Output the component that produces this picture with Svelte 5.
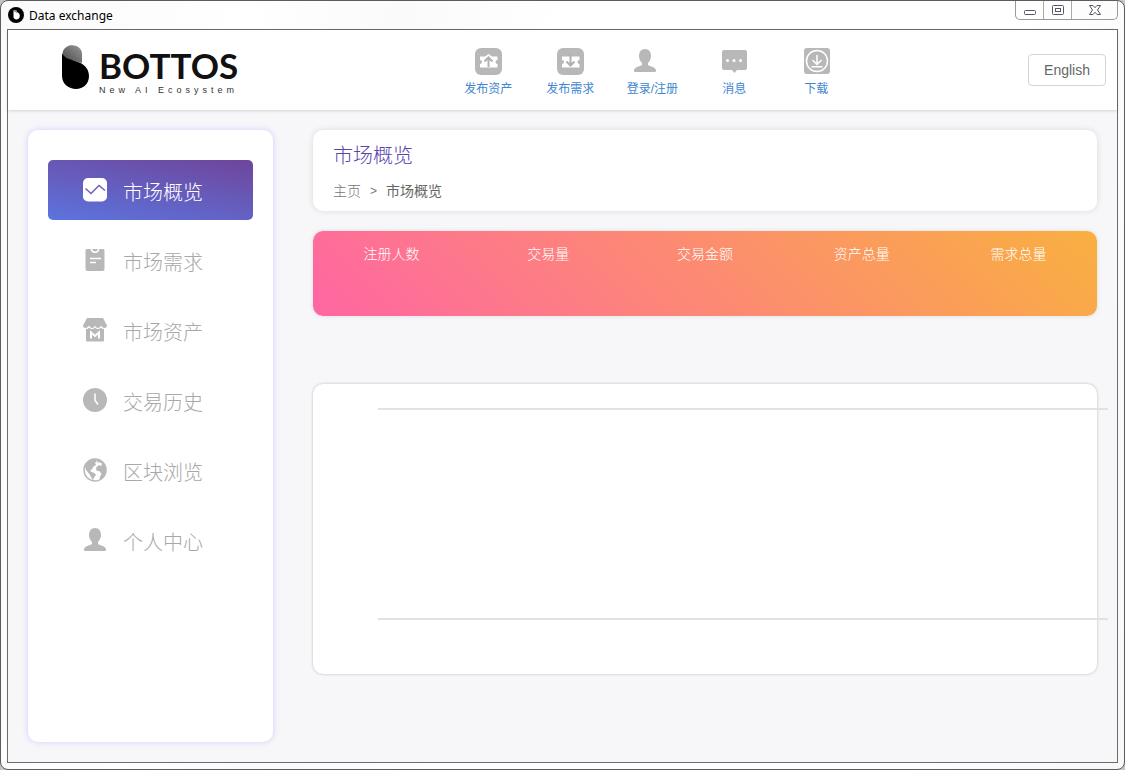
<script lang="ts">
  type Icon = 'upload' | 'request' | 'user' | 'message' | 'download' | 'chart' | 'clipboard' | 'shop' | 'clock' | 'globe';

  interface NavItem {
    icon: Icon;
    label: string;
  }

  const TOP_NAV: NavItem[] = [
    { icon: 'upload', label: '发布资产' },
    { icon: 'request', label: '发布需求' },
    { icon: 'user', label: '登录/注册' },
    { icon: 'message', label: '消息' },
    { icon: 'download', label: '下载' },
  ];

  const SIDE_NAV: NavItem[] = [
    { icon: 'chart', label: '市场概览' },
    { icon: 'clipboard', label: '市场需求' },
    { icon: 'shop', label: '市场资产' },
    { icon: 'clock', label: '交易历史' },
    { icon: 'globe', label: '区块浏览' },
    { icon: 'user', label: '个人中心' },
  ];

  const STATS = ['注册人数', '交易量', '交易金额', '资产总量', '需求总量'];

  let active = $state(0);
</script>

{#snippet topIcon(name: Icon)}
  <svg class="top-icon" viewBox="0 0 40 28" aria-hidden="true">
    {#if name === 'upload' || name === 'request'}
      <rect x="7" y="0" width="27" height="27" rx="6" fill="#b8b8b8" />
      {#if name === 'upload'}
        <path d="M12 8.500h5L20.500 6l3.500 2.500h5.500v3.500a2 2 0 0 0 0 4v3.500H12V16a2 2 0 0 0 0-4z" fill="#fff" />
        <path d="M20.500 19V9.500M16.500 13.500l4-4 4 4" fill="none" stroke="#b0b0b0" stroke-width="2" />
      {:else}
        <path d="M12 8.500h17.500v3.500a2 2 0 0 0 0 4v3.500H12V16a2 2 0 0 0 0-4z" fill="#fff" />
        <path d="M20.500 6v11M16.500 13.500l4 4 4-4" fill="none" stroke="#b0b0b0" stroke-width="2" />
      {/if}
    {:else if name === 'user'}
      <path d="M13 1c4 0 6 3 6 7 0 3-1.500 5.500-3 7v2c2 1.500 8 2 8 5.500 0 1-.5 1.500-1.500 1.500h-19c-1 0-1.500-.5-1.500-1.500C2 19 8 18.500 10 17v-2c-1.500-1.500-3-4-3-7 0-4 2-7 6-7z" fill="#b8b8b8" />
    {:else if name === 'message'}
      <path d="M10 2h21a2 2 0 0 1 2 2v16a2 2 0 0 1-2 2h-8l-2.500 3-2.500-3h-8a2 2 0 0 1-2-2V4a2 2 0 0 1 2-2z" fill="#b8b8b8" />
      <g fill="#fff">
        <circle cx="13.500" cy="12.500" r="1.500" />
        <circle cx="20" cy="12.500" r="1.500" />
        <circle cx="26.500" cy="12.500" r="1.500" />
      </g>
    {:else}
      <rect x="8" y="0" width="26" height="26" rx="3" fill="#b8b8b8" />
      <g fill="none" stroke="#fff" stroke-width="1.500">
        <circle cx="21" cy="13" r="10.500" />
        <path d="M21 7v9M16.500 12l4.500 4.500 4.500-4.500M15.500 18.800h11" />
      </g>
    {/if}
  </svg>
{/snippet}

{#snippet sideIcon(name: Icon)}
  <svg class="side-icon" viewBox="0 0 24 24" fill="#b8b8b8" aria-hidden="true">
    {#if name === 'chart'}
      <rect width="24" height="23.500" rx="5" fill="#fff" />
      <path d="M2.500 10.500 8 15.500l8-8 6 5" fill="none" stroke="#6f61b8" stroke-width="1.500" />
    {:else if name === 'clipboard'}
      <path d="M4 1h3.500c.5 2.500 2 4 4.500 4s4-1.500 4.500-4H20a1.500 1.500 0 0 1 1.500 1.500V21a2 2 0 0 1-2 2h-15a2 2 0 0 1-2-2V2.500A1.500 1.500 0 0 1 4 1z" />
      <path d="M9 1h6c-.5 1.500-1.500 2.500-3 2.500S9.500 2.500 9 1z" />
      <path d="M7 10.500h11M7 14.500h6" stroke="#fff" stroke-width="1.300" />
    {:else if name === 'shop'}
      <path d="M4 0h16l4 7.500c0 1.500-1 2.500-2.500 2.500S19 9 18 7.500C17 9 16.500 10 15 10s-2.500-1-3-2.500C11.500 9 10.500 10 9 10S7 9 6 7.500C5 9 4 10 2.500 10S0 9 0 7.500z" />
      <path d="M3 11c1.500 0 2-.5 3-1.500 2 2 4 2 6 0 2 2 4 2 6 0 1 1 1.500 1.500 3 1.500v11.500a1 1 0 0 1-1 1H4a1 1 0 0 1-1-1z" />
      <path d="M8 20.500v-6l4 3.500 4-3.500v6" fill="none" stroke="#fff" stroke-width="2" />
    {:else if name === 'clock'}
      <circle cx="12" cy="12" r="12" />
      <path d="M12 5.500v7l3 4" fill="none" stroke="#fff" stroke-width="1.500" />
    {:else if name === 'globe'}
      <circle cx="12" cy="12" r="11" fill="#fff" stroke="#b8b8b8" stroke-width="1.500" />
      <path d="M2 8C4 3 8 1 13 1l1 2-2 2 1 2-3 2-1 2.500-2 1 1.500 1.500 3 1 1.500 2-2 2.500-1 3C8 20 7.500 17 5.500 15L3 12z" />
      <path d="M14 1.200c5 1 8 4.500 9 9v3.500c-1 4-3.500 6.500-6.500 8l.5-3 1.500-3-2-2.500-3-.5-.5-3 2.500-2.500 3 .5.500-2-2.500-1.500-2 .5z" />
    {:else}
      <path d="M12 0c4 0 6 3 6 7 0 3-1.500 5.500-3 7v2c2 1.500 8 2 8 5.500 0 1-.5 1.500-1.500 1.500h-19c-1 0-1.500-.5-1.500-1.500C1 18 7 17.500 9 16v-2c-1.500-1.500-3-4-3-7 0-4 2-7 6-7z" />
    {/if}
  </svg>
{/snippet}

<div class="window">
  <div class="titlebar">
    <svg class="app-icon" viewBox="0 0 16 16" aria-hidden="true">
      <circle cx="8" cy="8" r="8" fill="#000" />
      <path d="M5.500 4c0-1.500 3.500-1.500 3.500 1 2.500 1 3.500 3 2.500 5.500-1 2.500-5 2.500-6 0z" fill="#fff" />
      <path d="M5.500 4c0-1.500 3.500-1.500 3.500 1v1z" fill="#888" />
    </svg>
    <span class="app-title">Data exchange</span>
    <div class="controls">
      <button aria-label="Minimize">
        <svg viewBox="0 0 14 12"><rect x="1.500" y="6.500" width="11" height="4" rx="1" fill="#fff" stroke="#556" /></svg>
      </button>
      <button aria-label="Maximize">
        <svg viewBox="0 0 14 12"><g fill="#fff" stroke="#556"><rect x="1.500" y="1.500" width="11" height="9" rx="1" /><rect x="4.500" y="4.500" width="5" height="3" /></g></svg>
      </button>
      <button class="close" aria-label="Close">
        <svg viewBox="0 0 14 12"><path d="M1.500 1.500H5l2 2.200 2-2.200h3.500L9.500 6l3 4.500H9L7 8.300l-2 2.200H1.500l3-4.500z" fill="#fff" stroke="#556" /></svg>
      </button>
    </div>
  </div>

  <div class="client">
    <header>
      <a class="brand" href="#home">
        <svg class="brand-mark" viewBox="0 0 28 45" aria-hidden="true">
          <defs>
            <linearGradient id="cap" x1="0" y1="1" x2="1" y2="0">
              <stop offset="0" stop-color="#444" />
              <stop offset="1" stop-color="#999" />
            </linearGradient>
          </defs>
          <path d="M0 13C3 14 10 15 20 18V8C19-1 5-3 1 6z" fill="url(#cap)" />
          <path d="M0 8c2 5 7 6 13 8 8 2 14 7 14 15 0 8-6 13-13 13S0 39 0 31z" fill="#000" />
        </svg>
        <span class="brand-text">
          <strong>BOTTOS</strong>
          <small>New AI Ecosystem</small>
        </span>
      </a>

      <nav class="top-nav">
        {#each TOP_NAV as item}
          <a href="#{item.icon}">
            {@render topIcon(item.icon)}
            <span>{item.label}</span>
          </a>
        {/each}
      </nav>

      <button class="lang">English</button>
    </header>

    <div class="body">
      <aside>
        {#each SIDE_NAV as item, i}
          <a href="#{item.icon}" class="side-item" class:active={active === i} onclick={() => (active = i)}>
            {@render sideIcon(item.icon)}
            <span>{item.label}</span>
          </a>
        {/each}
      </aside>

      <main>
        <section class="card heading">
          <h1>市场概览</h1>
          <div class="crumbs">
            <a href="#home">主页</a>
            <span class="sep">&gt;</span>
            <span class="current">市场概览</span>
          </div>
        </section>

        <section class="stats">
          {#each STATS as stat}
            <div>{stat}</div>
          {/each}
        </section>

        <section class="card chart">
          <div class="plot"></div>
        </section>
      </main>
    </div>
  </div>
</div>

<style>
  :global(body) { margin: 0; background: #c4c4c4; }
  .window { box-sizing: border-box; min-height: 100vh; display: flex; flex-direction: column; padding: 0 6px 6px; border: 1px solid #5c5c5c; border-radius: 8px; background: linear-gradient(100deg, #fafafa, #fff 20%, #fafafa 32%, #fff 45%, #fff 80%, #f8f8f8); font-family: "Liberation Sans", "Noto Sans CJK SC", sans-serif; }
  a { text-decoration: none; }
  button { font-family: inherit; cursor: pointer; }

  .titlebar { display: flex; align-items: center; height: 28px; }
  .app-icon { width: 16px; height: 16px; margin: 0 5px 0 1px; }
  .app-title { font: 12px "Noto Sans", sans-serif; color: #000; }
  .controls { display: flex; align-self: flex-start; margin-left: auto; border: 1px solid #999; border-top: 0; border-radius: 0 0 5px 5px; }
  .controls button { box-sizing: border-box; display: flex; align-items: center; justify-content: center; width: 28px; height: 18px; padding: 0; border: 0; border-right: 1px solid #aaa; background: transparent; }
  .controls .close { width: 45px; border-right: 0; }
  .controls svg { width: 14px; height: 12px; }

  .client { flex: 1; display: flex; flex-direction: column; border: 1px solid #6c6c6c; background: #f7f7fa; }
  header { display: grid; grid-template-columns: 22fr auto 13fr; align-items: center; height: 80px; background: #fff; box-shadow: 0 1px 3px rgba(0, 0, 0, .15); }
  .brand { display: flex; align-items: flex-start; gap: 9px; padding-left: 54px; color: #111; }
  .brand-mark { width: 28px; height: 45px; }
  .brand-text { display: flex; flex-direction: column; }
  .brand-text strong { font: 700 35px/41px Lato, sans-serif; }
  .brand-text small { font-size: 9px; line-height: 9px; letter-spacing: 4px; white-space: nowrap; color: #333; }

  .top-nav { display: grid; grid-template-columns: repeat(5, 82px); padding-top: 5px; }
  .top-nav a { display: flex; flex-direction: column; align-items: center; gap: 5px; font-size: 12px; line-height: 17px; color: #4187d0; }
  .top-icon { width: 40px; height: 28px; }
  .lang { justify-self: end; margin-right: 11px; height: 32px; padding: 0 15px; border: 1px solid #d4d4d4; border-radius: 4px; background: #fff; font-size: 14px; color: #666; }

  .body { flex: 1; display: flex; gap: 40px; padding: 20px; }
  aside { box-sizing: border-box; flex: 0 0 245px; display: flex; flex-direction: column; gap: 10px; padding: 30px 20px; border-radius: 10px; background: #fff; box-shadow: 0 0 6px rgba(100, 80, 255, .25); }
  .side-item { display: flex; align-items: center; gap: 16px; height: 60px; padding-left: 35px; border-radius: 5px; font-size: 20px; font-weight: 300; color: #a8a8a8; }
  .side-item span { padding-top: 2px; }
  .side-item.active { background: linear-gradient(10deg, #5c74de, #6f459b); color: #fff; }
  .side-icon { width: 24px; height: 24px; }

  main { flex: 1; min-width: 0; }
  .card { border-radius: 10px; background: #fff; box-shadow: 0 0 6px rgba(0, 0, 0, .12); }
  .heading { padding: 12px 20px 8px; }
  h1 { margin: 0 0 10px; font-size: 20px; line-height: 28px; font-weight: 300; color: #5a43ab; }
  .crumbs { display: flex; gap: 9px; font-size: 14px; line-height: 23px; color: #777; }
  .crumbs a { font-weight: 300; color: #777; }
  .sep { font-size: 12px; }
  .current { color: #666; }

  .stats { display: grid; grid-template-columns: repeat(5, 1fr); margin: 20px 0 68px; min-height: 85px; border-radius: 10px; background: linear-gradient(45deg, #ff66a3, #f9b040); box-shadow: 0 0 4px rgba(0, 0, 0, .12); color: #fff; font-size: 14px; font-weight: 300; line-height: 46px; text-align: center; }
  .chart { padding: 24px 0 54px 65px; box-shadow: 0 0 3px rgba(0, 0, 0, .25); }
  .plot { box-sizing: border-box; height: 212px; margin-right: -11px; border: solid #e2e2e2; border-width: 2px 0; }
</style>
